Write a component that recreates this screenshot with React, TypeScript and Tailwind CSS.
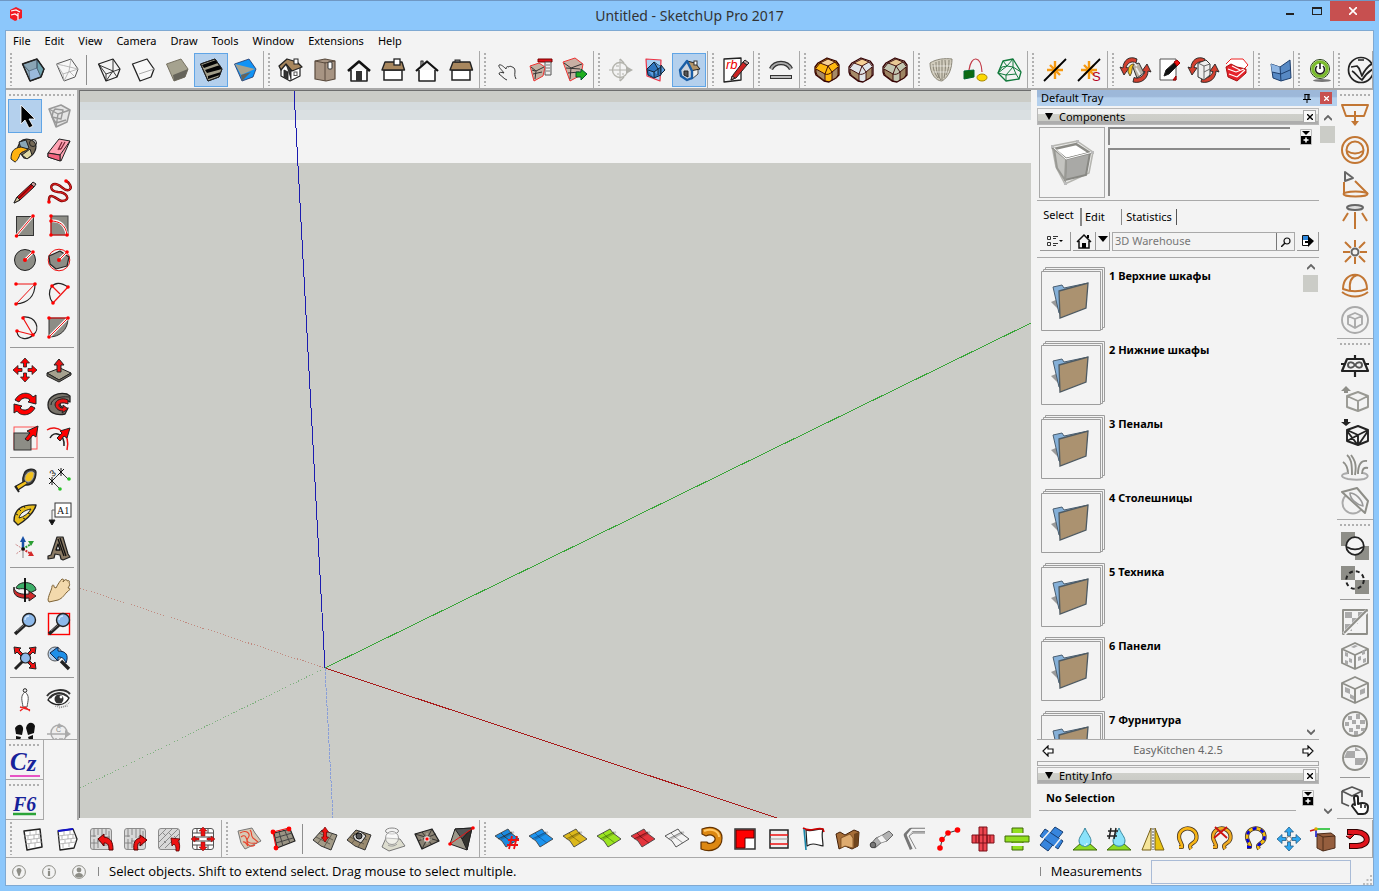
import type { ReactNode } from "react";
import clsx from "clsx";

interface PProps {
  d: string;
  f?: string;
  s?: string;
  w?: number;
  dash?: string;
}

// short path helper, the toolbars hold a lot of small drawings
const P = ({ d, f = "none", s = "#222", w = 1, dash }: PProps) => (
  <path d={d} fill={f} stroke={s} strokeWidth={w} strokeDasharray={dash} strokeLinejoin="round" />
);

const Dot = ({ x, y, r = 1.8, f = "#f00" }: { x: number; y: number; r?: number; f?: string }) => (
  <circle cx={x} cy={y} r={r} fill={f} />
);

const cube = "M1.5 6L16 1l7 10-3 8L9 23z";
const cubeInner = "M1.5 6l7 1.5L23 11M16 1L14 13 20 19M14 13L9 23";
const cubeFace = "M8 17l15-6-3 8L9 23z";
const sheet = "M0 9l13-7 3 4 8 6-13 8-4-6z";
const loop = "M4 20h3c1-3-3-5-3-10C4 3 11 0 16 2c7 3 7 11 2 14-3 2-4 3-2 6";

const Terrain = ({ f = "#a39b88" }: { f?: string }) => (
  <>
    <P d="M0 13L9 3l15 5-6 15-10-4z" f={f} s="#333" />
    <P d="M3 10l14 7M6 6l14 7M5 16L14 5M11 20l8-13" s="#4a463c" w={0.7} />
  </>
);

const Bricks = () => (
  <>
    <rect x="1.5" y="1.5" width="21" height="21" rx="2.5" fill="#d8d8d8" stroke="#8b8b8b" />
    <P d="M5 2v8M9 2v6M13 2v9M17 2v6M20 4v12M5 12v10M9 11v10M2 9h5M8 14h6M2 16h7M15 10h6M13 18h7" s="#777" w={0.8} />
  </>
);

const Wall = () => (
  <P d="M3 9l17-2M4 13l17-2M4 17l17-2M9 4v4M15 3v4M7 9v3M13 8v4M18 7v4M10 13v3M16 12v3M8 17v4M14 16v4" s="#999" w={0.7} />
);

const Wheel = () => (
  <>
    <P d="M13 12L2 22" s="#222" w={3.4} />
    <P d="M11 13L4 19" s="#777" />
    <circle cx="16" cy="8" r="6.5" fill="#8db9ea" stroke="#222" strokeWidth="1.4" />
    <P d="M12 8a4 4 0 014-4" s="#d3e8ff" w={1.4} />
  </>
);

const Arrows4 = ({ f = "#f00", s = "#222" }: { f?: string; s?: string }) => (
  <P
    d="M12 0l4.5 5h-3v4h-3V5h-3zM12 24l4.5-5h-3v-4h-3v4h-3zM0 12l5-4.5v3h4v3H5v3zM24 12l-5-4.5v3h-4v3h4v3z"
    f={f}
    s={s}
    w={0.8}
  />
);

const Swirl = () => (
  <>
    <P d="M14 1C6-3 0 3 0 10l-3-1 4 8 5-7-3-.5C4 6 8 2 13 5z" f="#d3402f" s="#222" w={0.9} />
    <P d="M10 24c9 2 15-4 15-11l3 1-4-8-5 7 3 .5c-1 4-6 8-11 6z" f="#d3402f" s="#222" w={0.9} />
  </>
);

const SheetIcon = ({ f, line = "#333" }: { f: string; line?: string }) => (
  <>
    <P d={sheet} f={f} s="#444" w={0.9} />
    <P d="M6 6l4 4 8 6M3 12l14-7" s={line} w={0.8} />
    <P d="M6 12l13-7" s="#0003" w={2} />
  </>
);

const Chamfer = ({ top, side, edge }: { top: string; side: string; edge: string }) => (
  <>
    <P d="M0 9l3-4 9-5 9 3 3 4v10l-3 3-7 4-5-1-8-6-1-3z" f={edge} s="#300" w={1.3} />
    <P d="M5 5l8-4 7 3-7 4z" f={top} s="#300" w={0.9} />
    <P d="M1 11l9 5v7l-8-6-1-3z" f={side} s="#300" w={0.9} />
    <P d="M17 14l6-5v8l-2 3-4 2z" f={side} s="#300" w={0.9} />
    <P d="M5 5l-4 5M13 8l-3 8M13 8l4 6M20 4l3 4M10 16c2 1 5 0 7-2" s="#300" w={0.9} />
  </>
);

const Loop = ({ s, dash }: { s: string; dash?: string }) => (
  <>
    <P d={loop} s="#432" w={4.2} />
    <P d={loop} s={s} w={2.6} />
    {dash && <P d={loop} s={dash} w={2.6} dash="4 4" />}
  </>
);

const icons: Record<string, ReactNode> = {
  xray: <><P d={cube} f="#8aa5b5" /><P d="M9 23l-1-10 8-3 4 9z" f="#9ab9dc" s="#4c6073" w={0.7} /><P d="M16 1l7 10-3 8-4-9z" f="#6fa3b0" s="#3d5262" w={0.7} /><P d="M1.5 6L8 13M16 1v9" s="#3d5262" w={0.8} /><P d={cube} w={1.4} /></>,
  backEdges: <><P d={cube} f="#f7f7f7" s="#555" /><P d={cubeInner} s="#aaa" w={0.8} /><P d="M1.5 6L8 16l15-5M8 16l1 7" s="#aaa" w={0.8} /></>,
  wire: <><P d={cube} w={1.2} /><P d="M1.5 6L9 16l14-5M9 16v7M16 1v12l4 6M16 13L9 23M16 13L2 7" w={0.9} /></>,
  hidden: <><P d={cube} f="#f8f8f8" w={1.3} /><P d="M8 16l15-5" s="#aaa" /></>,
  shaded: <><P d={cube} f="#a5a28f" s="#777263" /><P d={cubeFace} f="#66645b" s="none" /></>,
  textured: <><P d={cube} f="#a19d89" /><P d="M3 7l14-5 2 3L5 10zM6 12l15-5 2 4L8 15zM9 18l13-4-1 3-12 4z" f="#050505" s="none" /><P d={cube} /></>,
  mono: <><P d={cube} f="#1193f5" s="#236" w={0.8} /><P d="M2 6l20 5-14 6z" f="#a5a28f" s="none" /><P d="M8 17l10-3-9 9z" f="#66645b" s="none" /></>,
  iso: <><P d="M2 9v9l9 5 10-5v-8" f="#fff" w={1.2} /><P d="M0 8l8-7 10 3 5 5-10 4L7 6 2 12z" f="#a8875e" w={1.3} /><P d="M7 7l5 6v9M5 12v7l4 2v-7z" f="#333" w={0.9} /><rect x="15" y="1" width="4" height="5" fill="#fff" stroke="#222" /><rect x="15" y="14" width="3" height="3.5" fill="none" stroke="#555" /></>,
  top: <><P d="M2 3l10-2 10 2v18l-9 2-11-2z" f="#a79483" s="#5a4b3e" w={1.2} /><P d="M12 4v19M2 3l10 2 10-2" s="#5a4b3e" /><rect x="15" y="4" width="4" height="7" rx="1" fill="#fff" stroke="#333" /></>,
  front: <><P d="M4 12v11h16V12" f="#fff" w={1.6} /><P d="M1 13L12 3.5 23 13" w={2.6} s="#111" /><rect x="9" y="13" width="6" height="10" fill="#333" /></>,
  right: <><rect x="3" y="12" width="18" height="10" fill="#fff" stroke="#222" strokeWidth="1.5" /><P d="M4 4h17l2.5 8H1z" f="#a8875e" w={1.4} /><rect x="13" y="1" width="6" height="6" fill="#fff" stroke="#222" strokeWidth="1.3" /></>,
  back: <><P d="M4 12v11h16V12" f="#fff" w={1.6} /><P d="M6 8V3h2v4" w={1.2} /><P d="M1 13L12 3.5 23 13" w={2.2} s="#111" /></>,
  left: <><rect x="3" y="12" width="18" height="10" fill="#fff" stroke="#222" strokeWidth="1.5" /><P d="M4 4h17l2.5 8H1z" f="#a8875e" w={1.4} /><rect x="6" y="2" width="5" height="2" fill="#888" stroke="#222" /></>,
  touch: <P d="M12 22c-3-1-5-4-8-6 0-2 2-2 5-1C7 12 3 9 4 7c2-1 5 2 7 4 0-2 1-3 3-2 0-1 2-1 3 0 1 0 3 1 3 4s-1 4 1 8" s="#333" />,
  options: <><P d="M9 1h14v3H9z" f="#e2101a" s="#700" /><P d="M16 4h6v13h-6z" f="#eee" s="#555" /><P d="M17 7h4M17 10h4M17 13h4" s="#777" /><P d="M1 8l9-3 6 4-2 9-9 5z" f="#c3b0a2" s="#e33" /><P d="M2 9l5 4 8-4M7 13l-1 8M3 12l3 1M4 16l9-2" s="#333" /></>,
  interact: <><P d="M0 4l12-4 8 6-2 11-11 6z" f="#c9b0a4" s="#e33" /><P d="M1 5l7 5 11-4M8 10L7 21M3 10l14 1M5 15l11-1" s="#333" /><P d="M13 14h5v-3l6 5-6 6v-3h-5z" f="#1fae1f" s="#053" /></>,
  section: <><circle cx="11" cy="12" r="7.5" fill="none" stroke="#b5b5ae" strokeWidth="1.4" /><P d="M0 12h20M11 1v22M7 8h3M8 16h2M13 16h2" s="#b0b0aa" /><P d="M17 8l7 4-7 4z" f="#b0b0aa" s="none" /><P d="M11 1l4 4M11 23l4-4" s="#b0b0aa" w={1.5} /></>,
  sectionPlane: <><P d="M3 1l15 1-1 21L4 18z" f="#a9d2f5" s="#e34" w={1.2} /><P d="M4 11l7-7 7 5v8l-7 3-6-3z" f="#2f74bd" s="#123" /><P d="M18 7l4 5-4 4zM11 4l4 7 3-2M5 12l6 2v6M11 14l4-3v6" f="#5b9fe0" s="#123" /></>,
  sectionCut: <><P d="M12 11l9-2v7l-6 5-4-2z" f="#f0f0ec" s="#444" /><P d="M10 3l8 2 5 6-10 2z" f="#b29468" s="#222" /><P d="M3 12l7-9 5 10v7l-5 2-6-4z" f="#ccd3dc" s="#1a5ea6" w={2.4} /><P d="M7 13h4v6l-4-2z" f="#555" /><rect x="17" y="3" width="3" height="4" fill="#fff" stroke="#333" /></>,
  ruby: <><P d="M1 1l17-1v22L1 24z" f="#fff" w={1.3} /><text x="3" y="11" fontSize="13" fontStyle="italic" fontFamily="Liberation Sans" fill="#e00">rb</text><P d="M8 22l2-5L20 4l4 3-11 13z" f="#c22" s="#222" /><P d="M20 4l2-2 4 3-2 2zM8 22l1-4 3 2z" f="#b99" s="#222" /></>,
  bend: <><P d="M2 11c4-8 16-8 20 0" s="#333" w={4.4} /><P d="M2 11c4-8 16-8 20 0" s="#aaa" w={2} /><P d="M1 19h22" s="#333" w={4} /><P d="M2 19h20" s="#ccc" w={1.8} /></>,
  round: <Chamfer top="#f5cf95" side="#a68a68" edge="#ffb90f" />,
  sharp: <Chamfer top="#f5cf95" side="#a68a68" edge="#e1e5ea" />,
  bevel: <Chamfer top="#e8c894" side="#9d8462" edge="#c3c7b2" />,
  weave: <><P d="M1 5c6-4 15-5 22-4 0 9-3 18-10 22C7 23 1 16 1 5z" f="#d1ccbd" s="#8b8779" /><P d="M4 6c0 6 2 10 5 14M7 4c0 7 1 13 5 18M10 3v17M13 2v20M16 2c1 7 0 13-1 18M20 2c0 7-1 11-3 15" s="#7d786b" w={0.9} /><P d="M3 8h19M4 14h16" s="#fff8" /></>,
  wrap: <><P d="M6 12C8-3 18-3 19 14" s="#c23b48" w={1.2} /><P d="M1 13l10-1v7l-10 2z" f="#0c6a12" s="#063" /><ellipse cx="19" cy="19.5" rx="5" ry="3.5" fill="#fbd800" stroke="#a80" /></>,
  mesh: <><P d="M6 3l10-2 8 13-2 7-13 2-8-8z" s="#127a3c" w={1.3} /><P d="M6 3l4 5 6-7v8l8 5M10 8l6 1M10 8L1 15l8 2 7-8 3 7M9 17v6M9 17l10-1 3 5M1 15l4-6 5-1" s="#127a3c" /></>,
  snap: <><P d="M12 3v18M4 12h16M7 7l10 10M17 7L7 17" s="#f59a13" w={2.4} /><P d="M1 23L23 1" s="#000" w={1.8} /></>,
  snapS: <><P d="M12 3v18M4 12h16M7 7l10 10M17 7L7 17" s="#f59a13" w={2.4} /><P d="M1 23L23 1" s="#000" w={1.8} /><text x="15" y="23" fontSize="13" fontFamily="Liberation Sans" fill="#b3001c">S</text></>,
  swapMat: <><Swirl /><P d="M9 7l7-2 5 10-7 5z" f="#b8b1a4" s="#333" /><P d="M13 10l4 7M11 5l3 3" s="#eee" w={1.6} /><P d="M5 14c0-5 2-8 6-8-3 4-1 8-4 12z" f="#f3c31b" s="#653" /></>,
  editDoc: <><P d="M3 1h16v21H3z" f="#fff" s="#555" /><P d="M7 18l2-6 9-8 3 3-9 9z" f="#111" /><P d="M17 4l3-2 3 3-3 3zM16 22l3-4v4z" f="#e11" s="#900" /></>,
  swapComp: <><Swirl /><P d="M7 5l8-3 4 4v11l-6 5-6-3z" f="#eee" s="#333" /><P d="M7 5l6 3v14M13 8l6-2M13 14l6-3" s="#666" /></>,
  sk: <><P d="M1 6l5-5h12l5 6-4 4" f="#fff" s="#e22" /><P d="M1 9l5-3 6 3 9 2v4l-9 8-9-4z" f="#e5232b" s="#a11" /><P d="M3 11l8 3 8-3M4 16l8 3M12 19l8-7M7 8l8 4" s="#fff" w={1.1} /></>,
  flex: <><P d="M2 6l9 3L21 2l1 18-10 3-8-3z" f="#5789c4" s="#1d3f6e" /><P d="M2 6l9 3v7l-8-2z" f="#8fb6e3" s="none" /><P d="M11 9l1 14M3 14l9 2 9-4" s="#1d3f6e" /></>,
  power: <><ellipse cx="13" cy="22.5" rx="9" ry="1.5" fill="#777" /><circle cx="11" cy="11" r="9.5" fill="#fff" stroke="#243d10" /><circle cx="11" cy="11" r="7.2" fill="none" stroke="#7abb2c" strokeWidth="3.2" /><P d="M8 8a4.500 4.500 0 106 0M11 5v6" s="#222" w={1.6} /></>,
  vray: <><circle cx="12" cy="12" r="12.5" fill="none" stroke="#222" strokeWidth="1.7" /><P d="M2 9l6-1c3 2 3 6 5 10 3-7 6-10 11-13M9 2h6M3 13c4 2 5 6 10 9 3-5 6-8 11-11" s="#222" w={1.7} /></>,

  select: <P d="M8 1v19l4-4 4 8 4-2-4-7h6z" f="#000" s="#fff" w={0.8} />,
  component: <><P d="M2 5l12-4 9 5-3 12-11 5z" f="#e4e4e4" s="#999" w={1.5} /><P d="M2 5l9 5 12-4M11 10L9 23M6 8l-1 5 9 2 2-9-8-1zM5 13l4 6 10-3" s="#999" w={1.4} /></>,
  paint: <><P d="M7 4c5-5 15-3 16 4 0 7-7 14-12 12L4 11z" f="#756a58" w={1.2} /><P d="M6 4l7-2 3 8-7 4z" f="#89a7b8" /><P d="M9 17l8-6 2 6-5 4z" f="#dfd8a5" /><P d="M-2 21c0-8 3-11 10-12l7 2c-3 3-6 2-8 5-1 4-4 8-5 8z" f="#ffb20f" /><circle cx="20" cy="5" r="3.5" fill="none" stroke="#222" /></>,
  eraser: <><P d="M1 15L12 1l11 2-9 20-13-4z" f="#ffa3b3" /><P d="M1 15l12 2L23 3M13 17v6" /><P d="M1 15l12 2v6L1 19z" f="#f3637e" /><P d="M11 12l4-8M14 11l4-7M12 11h2" s="#7a2838" w={1.3} /></>,
  pencil: <><P d="M1 23l3-6L18 4l3 3L7 20z" f="#e0161d" /><P d="M6 18L19 5" s="#8a0000" w={1.5} /><P d="M1 23l3-6 3 3z" f="#d8c7a0" /><P d="M18 4l2-2 3 2-2 3z" f="#c99" /></>,
  freehand: <><P d="M2 22c-1-13 9-1 13-1 10-1 4-9-4-9C2 11 3 4 8 4c6 0 9 8 14 6 4-2 0-8-3-9" s="#7c0000" w={2.4} /><P d="M2 22c-1-13 9-1 13-1 10-1 4-9-4-9C2 11 3 4 8 4c6 0 9 8 14 6 4-2 0-8-3-9" s="#f02a2a" /><Dot x={2} y={22} /><Dot x={19} y={1} /></>,
  rect: <><rect x="3.5" y="2.5" width="17" height="19" fill="#8d8d86" stroke="#333" /><P d="M3 22L20 2" s="#fff" w={2.6} /><P d="M3 22L20 2" s="#e11" /><Dot x={3.5} y={22} /><Dot x={20} y={2} /></>,
  rotRect: <><rect x="4" y="2" width="17" height="19" fill="#8d8d86" stroke="#444" /><P d="M4 7c9-1 14 4 16 14" s="#fff" w={2.5} /><P d="M4 2v19h16C19 11 12 7 4 7" s="#e11" /><Dot x={4} y={2} /><Dot x={4} y={7} /><Dot x={4} y={21} /><Dot x={20} y={21} /></>,
  circle: <><circle cx="12" cy="12" r="10.5" fill="#8d8d86" stroke="#222" /><P d="M12 12l8-8" s="#fff" w={2.6} /><P d="M12 12l8-8" s="#e11" /><Dot x={12} y={12} r={2} /><Dot x={20} y={4} /></>,
  polygon: <><circle cx="12" cy="12" r="10.8" fill="none" stroke="#e11" /><P d="M2 8l11-5 9 6-2 9-11 3-6-5z" f="#8d8d86" w={1.2} /><P d="M12 12l8-8" s="#fff" w={2.6} /><P d="M12 12l8-8" s="#e11" /><Dot x={12} y={12} r={2} /><Dot x={20} y={4} /></>,
  arc: <><P d="M3 22C15 21 22 14 22 2" w={1.2} /><P d="M3 2h19L3 22" s="#e11" /><Dot x={3} y={2} /><Dot x={22} y={2} /><Dot x={3} y={22} /></>,
  arc2: <><P d="M6 21C-3 10 6-6 21 5" w={1.2} /><P d="M5 4l8 8M21 5L6 21" s="#e11" w={1.2} /><Dot x={5} y={4} /><Dot x={21} y={5} /><Dot x={6} y={21} /></>,
  arc3: <><P d="M10 1c13-1 18 12 10 18-6 6-15 4-16-3" w={1.2} /><P d="M10 2l10 17L4 15" s="#e11" w={1.2} /><Dot x={10} y={2} /><Dot x={20} y={19} /><Dot x={4} y={15} /></>,
  pie: <><P d="M2 2h19C21 14 13 21 2 21z" f="#8d8d86" s="#333" /><P d="M2 21L21 2" s="#fff" w={2.5} /><P d="M2 21L21 2H2" s="#e11" /><Dot x={2} y={2} /><Dot x={21} y={2} /><Dot x={2} y={21} /></>,
  move: <Arrows4 />,
  push: <><P d="M0 15l13-5 11 5-12 7z" f="#a5a18f" /><P d="M0 15v3l12 6 12-7v-2l-12 7z" f="#6c695f" /><P d="M12 1l5 6h-3v7h-4V7H7z" f="#ee1111" /></>,
  rotate: <><P d="M2 8C7-1 17 0 20 5l3-2v9l-8-2 2-2c-3-3-8-3-11 2z" f="#f00" /><P d="M22 16C17 25 7 24 4 19l-3 2v-9l8 2-2 2c3 3 8 3 11-2z" f="#f00" /></>,
  follow: <><P d="M1 13C1 4 11 0 20 2l3 2v6c-5-3-10-1-10 2s5 5 8 4l-3 6C8 24 1 20 1 13z" f="#77736a" w={1.3} /><P d="M4 13c0-6 8-9 18-8" /><P d="M21 8c-6-3-13 0-13 5 1 4 4 6 8 6l-1 2 6-4-5-4v3c-3 0-4-1-4-3s4-3 9-1z" f="#e11" /></>,
  scale: <><rect x="1" y="1" width="23" height="22" fill="none" stroke="#f55" /><rect x="1" y="7" width="17" height="17" fill="#8d8d86" stroke="#333" /><P d="M12 13l5-6-3-2 11-5-2 11-3-2-5 6z" f="#f00" /></>,
  offset: <><P d="M0 4C9-2 24 6 20 24" s="#e11" w={1.5} /><P d="M3 12c4-8 15-4 14 8" w={1.5} /><P d="M10 12l5-5-2-2 10-3-3 10-3-2-4 5z" f="#f00" /></>,
  tape: <><P d="M11 6c2-6 12-6 12-2 0 8-4 13-9 13-5 0-5-6-3-11z" f="#444" w={1.3} /><P d="M13 7c2-4 7-4 8-2 0 5-3 9-6 9-3-1-4-3-2-7z" f="#f2c11c" s="#aaa" /><P d="M12 13l-9 5 2 4 9-6" f="#f2c11c" w={1.2} /><P d="M2 18l4 6" w={2} /></>,
  dimension: <><P d="M5 13l9-9 7 7M5 13l8 8" s="#444" /><P d="M2 10l6 6M8 10l-6 6M5 9v8M11 1l6 6M17 1l-6 6M14 0v8" s="#111" /><Dot x={13} y={21} f="#26c126" /><Dot x={22} y={11} f="#26c126" /><text x="3" y="8" fontSize="9" fontFamily="Liberation Sans" fill="#111" transform="rotate(-40 6 5)">3</text></>,
  protractor: <><P d="M1 19C1 8 8 2 23 3 21 12 10 20 5 23z" f="#e7bd1b" w={1.4} /><P d="M6 16c1-5 6-8 12-9-2 4-7 8-12 9z" f="#f3f3f3" /><P d="M3 12l2 1M6 7l2 2M11 4l1 2M17 12l-2-1M12 17l-2-1" /></>,
  text: <><rect x="8" y="1" width="16" height="14" fill="#fff" stroke="#333" /><text x="10" y="12" fontSize="10" fontFamily="Liberation Serif" fill="#111">A1</text><P d="M8 8H5v10" s="#666" /><P d="M2 18h6l-3 5z" f="#111" /></>,
  axes: <><P d="M10 13V6" s="#1750a6" w={2.5} /><P d="M7 6l3-6 3 6z" f="#1750a6" s="none" /><P d="M10 13l8-5" s="#2b9e33" w={2} dash="2 1" /><P d="M15 5l6 0-3 5z" f="#2b9e33" s="none" /><P d="M10 13l8 5" s="#d42a2a" w={2} dash="2 1" /><P d="M15 20l6 0-3-5z" f="#d42a2a" s="none" /><P d="M10 13v9" s="#bbb" w={2} /><P d="M10 13l-7 5M10 13L2 8" s="#c88" dash="2 1" /><Dot x={10} y={13} f="#111" /></>,
  text3d: <><P d="M1 20l3-1 6-18h6l5 17 2 3-7 3-2-1-1-4-5-1-1 4-6 1z" f="#8b7b65" w={1.2} /><P d="M11 3l6 17M9 14h4l-2-6zM13 2l6 18" s="#111" w={1.3} f="#f3f3f3" /></>,
  orbit: <><P d="M3 10c3-8 19-7 20 2l-6 3c-1-4-7-5-11-4z" f="#3cae68" /><P d="M1 9c0 6 8 8 15 7v-3l7 5-7 5v-3C6 21-1 18 1 9z" f="#d12a2a" /><P d="M12 0v24" s="#000" w={1.8} /></>,
  pan: <P d="M1 22c1-7 4-10 4-14 1-2 2-1 2 1l2 1C11 6 13 3 15 1c2 0 2 1 1 3 2-3 4-3 4-1 2-1 3 0 2 2 1 1 1 2-1 5 3 0 2 2-1 4-3 3-4 6-9 8l-9 2z" f="#f3d9ac" s="#7d6235" />,
  zoom: <Wheel />,
  zoomWin: <><rect x="1.5" y="1.5" width="21" height="21" fill="none" stroke="#f00" strokeWidth="1.4" /><Wheel /></>,
  zoomExt: <><P d="M1 1l7 1-2 2 4 4-2 2-4-4-2 2zM23 1l-7 1 2 2-4 4 2 2 4-4 2 2zM23 23l-7-1 2-2-4-4 2-2 4 4 2-2z" f="#e11" /><P d="M10 15l-8 8" s="#222" w={3} /><circle cx="12.5" cy="12" r="5" fill="#8db9ea" stroke="#222" strokeWidth="1.2" /></>,
  zoomPrev: <><circle cx="8" cy="8" r="7" fill="#b5cfea" stroke="#555" /><P d="M14 15l8 8" w={3.4} /><P d="M3 7l8-6v4c8 0 11 4 8 12-2-5-4-6-8-6v4z" f="#1e8fe8" s="#124" /></>,
  position: <><circle cx="12" cy="2.5" r="1.8" fill="none" stroke="#222" /><P d="M12 4c-5 4-3 8-2 15h4c1-7 3-11-2-15z" f="#fff" s="#555" /><P d="M7 23l5-4 5 4M7 19l10 3" s="#e22" w={1.4} /></>,
  look: <><P d="M1 12C5 4 16 3 22 10c-4 8-14 9-21 2z" f="#fff" w={1.4} /><circle cx="12" cy="11" r="4.5" fill="#333" /><Dot x={14} y={9} r={1.4} f="#fff" /><P d="M0 8C5 1 18 0 23 6M3 10C8 4 15 4 20 8" s="#333" w={2} /><P d="M8 18c5 2 10 1 15-4M12 20l9-2" s="#888" dash="1 1" /></>,
  walk: <><P d="M2 6c4-6 9-3 8 2l-1 5-6-1zM3 14l5 1-1 3-4-1zM13 6c1-6 7-7 9-2l-1 7-6 2zM15 15l5-2v4l-4 1z" f="#111" s="none" /></>,
  sectionTool: <><circle cx="12" cy="11" r="8" fill="#eee" stroke="#aaa" strokeWidth="1.4" /><P d="M0 12h21M9 16v3M13 16v3M15 16v3" s="#aaa" w={1.5} /><P d="M18 8l6 4-6 4zM12 1l4 4h-6z" f="#aaa" s="none" /><text x="9" y="10" fontSize="7" fontFamily="Liberation Sans" fill="#888">C</text></>,

  brick: <><P d="M3 4l16-2 2 18-15 3z" f="#fff" w={1.5} /><Wall /></>,
  brickBlue: <><P d="M3 4l15-2 4 10-3 9-14 2z" f="#fff" w={1.3} /><Wall /><P d="M3 4l15-2" s="#11c" w={2} /></>,
  brickL: <><Bricks /><P d="M9 12l6-5v3c7 1 9 5 9 13h-4c0-5-1-7-5-7v3z" f="#e11" s="#500" /></>,
  brickR: <><Bricks /><P d="M24 13l-7-5v3c-5 1-7 5-6 12h4c-1-5 0-7 2-8v4z" f="#e11" s="#500" /></>,
  brickUp: <><rect x="1.5" y="1.5" width="21" height="21" rx="2.5" fill="#d8d8d8" stroke="#8b8b8b" /><P d="M2 9l7-7M2 15L15 2M2 21L21 2M8 21L22 7M6 6l3 3M12 6l2 2M7 14l2 2M17 9l2 2" s="#777" w={0.8} /><P d="M14 11l9 1-2 2c2 3 2 6 1 10h-3c0-4 0-5-2-7l-2 2z" f="#e11" s="#500" w={0.8} /></>,
  brickMove: <><rect x="1.5" y="1.5" width="21" height="21" rx="2.5" fill="#fff" stroke="#555" /><P d="M2 6h20M2 10h20M2 14h20M2 18h20M6 2v4M17 2v4M5 10v4M18 10v4M6 18v4M17 18v4" s="#444" /><P d="M12 0l4 4h-2v5h-4V4H8zM12 24l4-4h-2v-5h-4v5H8zM0 12l4-3v2h4v2H4v2zM24 12l-4-3v2h-4v2h4v2z" f="#e11" s="#711" w={0.5} /></>,
  contours: <><P d="M1 4l14-3 3 5 6 8-16 8-4-6z" f="#d8c9b6" s="#777" /><P d="M3 6c7-4 11 1 8 5s2 6 9 5M4 10c5-4 6 3 6 5s3 6 8 3M6 15c3-1 3 2 5 4M13 3c3 3 0 5 3 8l5 4" s="#e8412a" w={1.1} /></>,
  scratch: <><P d="M3 6l16-4 5 12-18 7z" f="#9a9484" w={1.2} /><P d="M8 5l4 14M14 4l5 12M4 11l17-5M5 16l17-5" s="#444" /><P d="M5 20L2 5l16-4" s="#e11" w={1.2} /><Dot x={2} y={5} r={2.4} /><Dot x={18} y={2} r={2.4} /><Dot x={5} y={21} r={2.4} /></>,
  smoove: <><Terrain /><P d="M12 0l3.500 5h-2v5h2L12 15l-3.500-5h2V5h-2z" f="#e11" s="#700" w={0.7} /></>,
  stamp: <><Terrain f="#9a8b70" /><P d="M6 9l7-5 6 5-5 7-6-3z" f="#ddd" /><circle cx="12" cy="9" r="3" fill="#555" stroke="#111" /></>,
  drape: <><P d="M1 20l4-9 14 1 5 7-16 5z" f="#ddddcf" s="#777" /><ellipse cx="11" cy="4" rx="6.500" ry="3" fill="none" stroke="#888" /><circle cx="11" cy="11" r="6.5" fill="#fff8" stroke="#999" /><P d="M7 18c3 2 7 1 9-1" s="#999" /></>,
  detail: <><P d="M0 7l17-5 7 12-17 8z" f="#8b8374" w={1.3} /><P d="M0 7l24 7M17 2L7 22M7 5l10 13M3 14l18-7" s="#222" w={0.8} /><P d="M12 6v12M6 12h12" s="#bba" dash="2 1" /><rect x="10" y="10" width="4" height="4" fill="#f00" stroke="#fff" /></>,
  flip: <><P d="M6 2l17-1-5 22L1 17z" f="#9c988a" /><P d="M6 2l17-1-10 11z" f="#555" /><P d="M23 1l-5 22-5-11z" f="#33332f" /><P d="M1 17L24 1" s="#e11" /><Dot x={1} y={17} /><Dot x={24} y={1} /></>,

  skinHash: <><SheetIcon f="#1b8be0" /><P d="M17 9l-3 13M22 9l-3 13M13 13h11M12 18h11" s="#e11" w={1.8} /></>,
  skinBlue: <SheetIcon f="#1b93ee" line="#1259a0" />,
  skinGold: <SheetIcon f="#dcb81c" line="#8c7206" />,
  skinGreen: <SheetIcon f="#9be421" line="#4f8d0d" />,
  skinRed: <SheetIcon f="#e3343c" line="#7a0d12" />,
  skinWire: <SheetIcon f="#f4f4f4" line="#777" />,
  cShape: <><P d="M3 2c10-4 20 0 20 9 0 11-11 15-21 11v-7h6c1 3 9 1 8-4-1-3-5-4-9-2l-4-2z" f="#dd8812" s="#643300" w={1.2} /><P d="M5 4c8-3 15 0 15 6" s="#ffc663" w={2} /></>,
  redL: <><rect x="2" y="2" width="20" height="20" fill="#fff" stroke="#333" strokeWidth="1.5" /><P d="M3 3h18v8H12v10H3z" f="#f00" s="#500" /></>,
  ladder: <><rect x="3" y="3" width="18" height="18" fill="#eee" stroke="#222" strokeWidth="1.5" /><P d="M3 8h18M3 17h18" s="#e11" w={1.5} /><P d="M3 12h18" s="#999" /></>,
  flag: <><P d="M5 3c5 2 10-1 17-1-2 6 0 11 0 17-6-1-10-4-16 0z" f="#fff" w={1.2} /><P d="M2 1c8 5 12-1 20 1l1 3" s="#c00" w={1.6} /><P d="M3 2l2 21" s="#1885a8" w={1.6} /></>,
  wood: <><P d="M1 7l4-2 5 3 9-5 5 2-1 14-6 3-7-3-6 3z" f="#a66d37" s="#432008" /><P d="M6 11l9-4 3 4v10l-8-2-4 2z" f="#deab6f" s="#6b4019" w={0.7} /><P d="M19 7l5-2-1 14-4 2z" f="#6f441c" s="none" /></>,
  pipe: <><P d="M1 18l5 3 7-6 5-1 6-6-4-4-8 5-5 2z" f="#b2b2b2" s="#666" /><P d="M8 11l4 5 6-2-5-6z" f="#f4f4f4" s="#888" w={0.7} /><circle cx="4" cy="18" r="2.8" fill="#777" stroke="#444" /></>,
  gutter: <><P d="M22 3H8L3 8l6 14" s="#777" w={4.6} /><P d="M23 3H9L5 8l6 14" s="#f3f3f3" w={2.4} /><P d="M22 6H10L6 9l7 13" s="#777" w={0.9} /></>,
  nodes: <><P d="M3 22l2-9 6-7 10-3" s="#333" /><Dot x={3} y={21} r={2.8} /><Dot x={5} y={12.5} r={2.8} /><Dot x={11} y={6} r={2.8} /><Dot x={20.5} y={3} r={2.8} /></>,
  crossRed: <><P d="M8 0h8v24H8zM1 8h22v8H1z" f="#ee4650" s="#7a1018" /><P d="M8 8v8M16 8v8M5 8v8M19 8v8M12 0v24" s="#7a1018" /></>,
  crossGreen: <><P d="M7 1h11v22H7z" f="#93df20" s="#3f6909" /><P d="M6 6h13v3H6zM6 16h13v3H6z" f="#f3f3f3" s="none" /><P d="M0 9h24v6H0z" f="#93df20" s="#3f6909" /></>,
  crossBlue: <><P d="M16 0l8 5-15 19-8-6z" f="#3785dd" s="#173e72" /><P d="M6 2l18 12-5 8L1 9z" f="#3785dd" s="#173e72" /><P d="M11 4l-8 9M22 11l-8 10M4 0L0 7" s="#f3f3f3" w={1.5} /></>,
  drop: <><P d="M0 23l8-7h8l8 7z" f="#8edb24" s="#3f6909" /><P d="M12 1c3 7 6 9 6 13 0 7-12 7-12 0 0-4 3-6 6-13z" f="#8ae2fa" s="#36869e" /><P d="M14 16c0 2-1 3-3 2" s="#fff" /></>,
  dropHash: <><P d="M0 23l8-7h8l8 7z" f="#8edb24" s="#3f6909" /><P d="M12 1c3 7 6 9 6 13 0 7-12 7-12 0 0-4 3-6 6-13z" f="#8ae2fa" s="#36869e" /><P d="M4 1L2 12M9 1L7 12M1 4h10M0 9h10" w={1.5} /></>,
  prism: <><P d="M10 1v22H1z" f="#f5e59a" s="#776017" /><P d="M14 1v22h9z" f="#e9c312" s="#776017" /><P d="M12 1v22" s="#555" dash="2 1" /></>,
  loop: <Loop s="#f7b515" />,
  loopCut: <><Loop s="#f0ab21" /><P d="M6 0l12 11M18 0L5 11" s="#c11" w={1.8} /></>,
  loopBlue: <Loop s="#f7c012" dash="#00d" />,
  moveBlue: <><Arrows4 f="#30a8f0" s="#245e88" /><circle cx="12" cy="12" r="2.5" fill="#fff" stroke="#777" /></>,
  boxAxes: <><P d="M6 7l14-1 4 3v12l-12 3-6-3z" f="#955e3e" s="#4d2c19" /><P d="M6 7l6 3v14M12 10l12-1" s="#4d2c19" /><P d="M6 2L-1 4" s="#c11" w={1.4} /><P d="M5 2h14" s="#1b2" w={1.5} /><P d="M5 2v8" s="#11c" w={1.5} /><Dot x={5} y={2} f="#da0" /></>,
  magnet: <><P d="M2 5h10c13 1 13 14 0 14H4" s="#300" w={6} /><P d="M3 5h9c13 1 13 14 0 14H5" s="#e0141d" w={4} /><P d="M1 9l4 3 5-5" f="#e0141d" s="#300" /></>,
};

// 28px set of the render toolbar
const ORANGE = "#c27633";
const GREY = "#8e8e88";
const HexCube = () => <P d="M1 7l13-6 13 6v14l-13 6-13-6zM1 7l13 6 13-6M14 13v14" s={GREY} w={1.9} />;

const bigIcons: Record<string, ReactNode> = {
  rectLight: <><P d="M1 3h26l-4 11H5z" s={ORANGE} w={2} /><P d="M14 9v12" s={ORANGE} w={2} /><P d="M10 19h8l-4 5z" f={ORANGE} s="none" /></>,
  sphereLight: <><circle cx="14" cy="14" r="13" fill="none" stroke={ORANGE} strokeWidth="2" /><circle cx="14" cy="14" r="8.5" fill="none" stroke={ORANGE} strokeWidth="2" /><P d="M6 15c5 3 11 3 16 0" s={ORANGE} w={2} /></>,
  spotLight: <><P d="M4 2l8 6-8 3z" s="#666" w={2} /><P d="M3 12v12M14 11l13 13" s={ORANGE} w={2} /><ellipse cx="14.5" cy="24" rx="12" ry="2.5" fill="none" stroke={ORANGE} strokeWidth="2" /></>,
  iesLight: <><ellipse cx="14" cy="3.5" rx="8" ry="2.5" fill="#ddd" stroke="#666" strokeWidth="2" /><P d="M14 8v17M7 9L2 17M21 9l5 8" s={ORANGE} w={2} /></>,
  omniLight: <><circle cx="14" cy="14" r="3.5" fill="none" stroke="#666" strokeWidth="2" /><P d="M14 2v7M14 19v7M2 14h7M19 14h7M4 4l6 6M18 18l6 6M24 4l-6 6M10 18l-6 6" s={ORANGE} w={2} /></>,
  domeLight: <><P d="M2 17C2-2 26-2 26 17c-8 3-16 3-24 0zM9 18C8 10 10 5 16 3M1 20c8 6 18 6 26 0" s={ORANGE} w={2} /></>,
  meshLight: <><circle cx="14" cy="14" r="13" fill="none" stroke="#aaa" strokeWidth="1.9" /><P d="M7 10l7-3 7 3v8l-7 4-7-4zM7 10l7 3 7-3M14 13v9" s="#aaa" w={1.9} /></>,
  plane: <><P d="M6 8h16l5 12H1zM0 13h4M24 13h4M14 4v4M14 20v6" s="#222" w={2.2} /><P d="M14 14c-3-4-7-3-7 0s4 4 7 0 7-3 7 0-4 4-7 0" s="#555" w={2} /></>,
  exportProxy: <><P d="M6 11l11-4 10 4v11l-10 4-11-4zM6 11l11 5 10-5M17 16v10" s="#999993" w={1.9} /><P d="M5 1l5 5H7v2H3V6H0z" f={GREY} s="none" /></>,
  importProxy: <><P d="M6 11l11-4 10 4v11l-10 4-11-4zM6 11l11 5 10-5M17 16v10M6 12l10 13M17 16L6 22M27 12L18 25" s="#222" w={1.9} /><P d="M5 7l5-4H7V0H3v3H0z" f="#222" s="none" /></>,
  fur: <><P d="M11 22C11 10 10 5 6 2M14 22C16 10 13 6 10 2M17 21c0-9 3-14 9-13M7 21C7 14 5 11 2 9M21 21c0-5 2-7 6-6" s={GREY} w={1.9} /><P d="M7 20c-7 1-9 4 0 6 6 1 12 1 16 0 6-2 4-5-1-6" s="#aaa" w={1.9} /></>,
  clipper: <><circle cx="12" cy="16" r="10.5" fill="none" stroke="#aaa" strokeWidth="1.9" /><P d="M1 5l15-4 11 13-3 12z" s={GREY} w={2} f="#f3f3f3" /><P d="M9 6c5 0 12 6 13 13-6-1-13-7-13-13z" s="#999" w={1.6} /></>,
  hideV: <><P d="M0 0h14v14H0zM14 14h14v14H14z" f={GREY} s="none" /><circle cx="14" cy="14" r="8.8" fill="#f3f3f3" stroke="#222" strokeWidth="1.8" /><P d="M6 15c5 3 11 3 16 0" w={1.7} /></>,
  showV: <><P d="M0 0h14v14H0zM14 14h14v14H14z" f={GREY} s="none" /><circle cx="14" cy="14" r="8.8" fill="none" stroke="#222" strokeWidth="2" strokeDasharray="4 3" /></>,
  matPlane: <><P d="M2 2h24v24H2z" s={GREY} w={1.9} /><P d="M4 4h7v6H4zM11 10h6v6h-6zM17 4h7l-7 6zM4 16h7v7H4z" f="#aaa" s="none" /><P d="M3 26L26 3" s="#f3f3f3" w={4} /><P d="M3 25L26 2" s={GREY} w={1.9} /></>,
  cubeFine: <><HexCube /><P d="M4 10l3 1v4l-3-1zM8 16l3 1v4l-3-1zM17 15l3-1v4l-3 1zM21 9l3-1v4l-3 1zM22 17l3-1v4l-3 1zM10 5l4-2 3 1-4 2zM4 18l3 1v4l-3-1z" f="#aaa" s="none" /></>,
  cubeCoarse: <><HexCube /><P d="M4 11l5 2v5l-5-2zM9 18l4 2v4l-4-2zM19 14l5-2v5l-5 2z" f="#aaa" s="none" /></>,
  sphereFine: <><circle cx="14" cy="14" r="12" fill="none" stroke={GREY} strokeWidth="1.9" /><P d="M7 6h4v4H7zM15 4h4v5h-4zM11 10h4v4h-4zM19 10h5v4h-5zM4 12h4v4H4zM15 15h4v4h-4zM8 18h4v4H8zM13 21h4v4h-4zM20 18h4v3h-4z" f="#aaa" s="none" /></>,
  sphereCoarse: <><circle cx="14" cy="14" r="12" fill="none" stroke={GREY} strokeWidth="1.9" /><P d="M6 7h8v7H3zM14 14h11l-4 7h-7zM14 7V3l6 4z" f="#aaa" s="none" /></>,
  pick: <><P d="M1 5l10-4 10 4v6M1 5l10 5 10-5M1 5v12l7 3" s="#555" w={1.7} /><P d="M13 12c0-3 4-3 4 0v6c4-2 10-1 10 3 0 4-1 7-5 7h-5l-6-8c1-3 3-1 3-1z" f="#fff" s="#222" w={2} /><P d="M20 18v4M24 19v3" w={1.6} /></>,
};

const topGroups = [
  { keys: ["xray", "backEdges", "|", "wire", "hidden", "shaded", "textured", "mono"] },
  { keys: ["iso", "top", "front", "right", "back", "left"] },
  { keys: ["touch", "options", "interact"] },
  { keys: ["section", "sectionPlane", "sectionCut"] },
  { keys: ["ruby"] },
  { keys: ["bend"] },
  { keys: ["round", "sharp", "bevel"] },
  { keys: ["weave", "wrap", "mesh"] },
  { keys: ["snap", "snapS"] },
  { keys: ["swapMat", "editDoc", "swapComp", "sk"], className: "w-[146px]" },
  { keys: ["flex"], className: "w-10" },
  { keys: ["power"], className: "w-10" },
  { keys: ["vray"], className: "flex-1" },
];

const bottomGroups = [
  { keys: ["brick", "brickBlue", "brickL", "brickR", "brickUp", "brickMove"] },
  { keys: ["contours", "scratch", "|", "smoove", "stamp", "drape", "detail", "flip"] },
  {
    keys: [
      "skinHash", "skinBlue", "skinGold", "skinGreen", "skinRed", "skinWire", "cShape", "redL", "ladder",
      "flag", "wood", "pipe", "gutter", "nodes", "crossRed", "crossGreen", "crossBlue", "drop", "dropHash",
      "prism", "loop", "loopCut", "loopBlue", "moveBlue", "boxAxes", "magnet",
    ],
    className: "flex-1",
  },
];

const leftSections = [
  ["select", "component", "paint", "eraser"],
  ["pencil", "freehand", "rect", "rotRect", "circle", "polygon", "arc", "arc2", "arc3", "pie"],
  ["move", "push", "rotate", "follow", "scale", "offset"],
  ["tape", "dimension", "protractor", "text", "axes", "text3d"],
  ["orbit", "pan", "zoom", "zoomWin", "zoomExt", "zoomPrev"],
  ["position", "look", "walk", "sectionTool"],
];

const rightSections = [
  ["rectLight", "sphereLight", "spotLight", "iesLight", "omniLight", "domeLight", "meshLight"],
  ["plane", "exportProxy", "importProxy", "fur", "clipper"],
  ["hideV", "showV", "|", "matPlane", "cubeFine", "cubeCoarse", "sphereFine", "sphereCoarse", "|", "pick"],
];

const active = ["textured", "sectionCut", "select"];
const menus = ["File", "Edit", "View", "Camera", "Draw", "Tools", "Window", "Extensions", "Help"];
const folders = ["1 Верхние шкафы", "2 Нижние шкафы", "3 Пеналы", "4 Столешницы", "5 Техника", "6 Панели", "7 Фурнитура"];

const ToolButton = ({ name }: { name: string }) => (
  <button
    aria-label={name}
    className={clsx(
      "flex h-[34px] w-[34px] shrink-0 items-center justify-center border",
      active.includes(name) ? "border-[#60a5e6] bg-[#b4d0ed]" : "border-transparent"
    )}
  >
    {icons[name] ? (
      <svg viewBox="0 0 24 24" className="h-6 w-6 shrink-0 overflow-visible">{icons[name]}</svg>
    ) : (
      <svg viewBox="0 0 28 28" className="h-7 w-7 shrink-0 overflow-visible">{bigIcons[name]}</svg>
    )}
  </button>
);

const GripX = () => (
  <div className="mx-[3px] mb-[3px] mt-1 h-[2px] shrink-0 bg-[repeating-linear-gradient(90deg,#b0b0b0_0_2px,transparent_2px_4px)]" />
);

const ToolGroup = ({ keys, className }: { keys: string[]; className?: string }) => (
  <div className={clsx("flex shrink-0 items-center overflow-hidden border-r border-[#a9a9a9] pr-px", className)}>
    <div className="mx-1 h-[33px] w-[2px] shrink-0 bg-[repeating-linear-gradient(#b0b0b0_0_2px,transparent_2px_4px)]" />
    {keys.map((k, i) =>
      k === "|" ? <div key={i} className="ml-[2px] mr-[5px] h-[30px] w-px shrink-0 bg-[#8e8e8e]" /> : <ToolButton key={k} name={k} />
    )}
  </div>
);

const Chevron = ({ down = false }: { down?: boolean }) => (
  <svg viewBox="0 0 8 6" className="h-[6px] w-2">
    <path d={down ? "M0 1l4 4 4-4" : "M0 5l4-4 4 4"} fill="none" stroke="#666" strokeWidth="1.8" />
  </svg>
);

const Scroll = ({ className }: { className?: string }) => (
  <div className={clsx("flex w-[15px] shrink-0 flex-col items-center justify-between", className)}>
    <div className="flex w-full flex-col items-center gap-[5px]">
      <Chevron />
      <div className="h-[17px] w-full bg-[#cbccc7]" />
    </div>
    <Chevron down />
  </div>
);

const SectionHeader = ({ title }: { title: string }) => (
  <div className="flex h-[17px] shrink-0 items-center border border-[#b9b9b9] bg-linear-to-b from-[#f3f3f3] from-30% via-[#cfd0cb] via-35% to-[#cbccc7] to-75% pl-[7px] shadow-[inset_0_-3px_#adadad]">
    <svg viewBox="0 0 8 7" className="mr-[6px] h-[7px] w-2"><path d="M0 0h8L4 7z" /></svg>
    <span className="flex-1 text-[11px] leading-4">{title}</span>
    <button aria-label="Close" className="mr-[2px] flex h-[13px] w-[13px] items-center justify-center border border-[#aaa] bg-[#f8f8f8]">
      <svg viewBox="0 0 6 6" className="h-[6px] w-[6px]"><path d="M0 0l6 6M6 0L0 6" stroke="#000" strokeWidth="1.4" /></svg>
    </button>
  </div>
);

const Expand = () => (
  <button aria-label="Details" className="flex h-4 w-3 shrink-0 items-center justify-center">
    <svg viewBox="0 0 12 16" className="h-4 w-3">
      <path d="M.5.5h11v15H.5z" fill="#f3f3f3" stroke="#bbb" />
      <path d="M2 2h8L6 6zM1 7h10v8H1z" />
      <path d="M6 8.500v5M3.500 11h5" stroke="#fff" strokeWidth="1.5" />
    </svg>
  </button>
);

const FolderThumb = () => (
  <svg viewBox="0 0 64 64" className="h-16 w-16 shrink-0">
    <path d="M4.5 2V.5h59v60h-2M2.500 4V2.500h59v60h-2M.500 4.500h59v59H.500z" fill="#f3f3f3" stroke="#9d9d9d" />
    <path d="M10 35l12-5v17z" fill="#999" />
    <path d="M12 20l9-2 2 3 24-5-25 32-4-2z" fill="#85b0d8" stroke="#4a5e70" />
    <path d="M18 24l29-8-2 25-26 10z" fill="#ab9270" stroke="#4e5a62" strokeWidth="1.3" />
  </svg>
);

const Arrow = ({ flip = false }: { flip?: boolean }) => (
  <button aria-label={flip ? "Forward" : "Back"} className="flex h-5 w-[22px] items-center justify-center">
    <svg viewBox="0 0 12 12" className="h-3 w-3">
      <path d={flip ? "M1 4h5V1l5 5-5 5V8H1z" : "M11 4H6V1L1 6l5 5V8h5z"} fill="#fff" stroke="#111" strokeWidth="1.2" />
    </svg>
  </button>
);

const Tray = () => (
  <aside className="ml-[6px] flex w-[300px] shrink-0 flex-col text-black">
    <div className="flex h-4 shrink-0 items-center bg-linear-to-b from-[#9db8d9] from-40% to-[#b4d0ed] to-50% pl-1">
      <h2 className="flex-1 text-[11px] leading-4">Default Tray</h2>
      <button aria-label="Pin" className="mr-[9px]">
        <svg viewBox="0 0 8 9" className="h-[9px] w-2"><path d="M2 0v5M6 0v5M1.500.5h5M0 5.500h8M4 6v3M5 1v4" stroke="#000" fill="none" /></svg>
      </button>
      <button aria-label="Close tray" className="mr-[5px] flex h-3 w-3 items-center justify-center bg-[#c75050]">
        <svg viewBox="0 0 6 6" className="h-[5px] w-[5px]"><path d="M0 0l6 6M6 0L0 6" stroke="#fff" strokeWidth="1.5" /></svg>
      </button>
    </div>
    <div className="mt-[2px] flex min-h-0 flex-1">
      <div className="flex min-w-0 flex-1 flex-col">
        <SectionHeader title="Components" />
        <div className="flex h-[76px] shrink-0 border-b border-[#a9a9a9] pl-[2px] pt-[2px]">
          <div className="flex h-[71px] w-[66px] items-center justify-center border border-[#a9a9a9]">
            <svg viewBox="0 0 44 46" className="h-[46px] w-[44px]">
              <path d="M2 6L27 1l16 11-4 21-24 11-9-17z" fill="#e9e9e7" stroke="#b5b5b0" strokeWidth="1.5" />
              <path d="M4 9l22-5 14 9-24 6z" fill="#fff" stroke="#8b8b86" strokeWidth="2.5" />
              <path d="M16 19l24-6-4 22-21 5z" fill="#a9a9a6" stroke="#888883" strokeWidth="2" />
              <path d="M4 9l12 10-1 21-8-12z" fill="#c4c4c0" stroke="#999994" strokeWidth="2" />
              <path d="M2 6l14 13M43 12l-27 7" stroke="#fff" />
              <path d="M1 5h3v3H1zM26 0h3v3h-3zM41 11h3v3h-3zM14 42h3v3h-3z" fill="#bbb" />
            </svg>
          </div>
          <div className="ml-[3px] flex flex-1 flex-col gap-[3px]">
            <input aria-label="Component name" className="h-[18px] w-full border-l-2 border-t-2 border-[#8a8a8a] bg-transparent text-xs outline-none" />
            <textarea aria-label="Description" className="h-[48px] w-full resize-none border-l-2 border-t-2 border-[#8a8a8a] bg-transparent text-xs outline-none" />
          </div>
          <div className="ml-[10px] mr-[7px] pt-[2px]"><Expand /></div>
        </div>
        <div className="flex h-[30px] shrink-0 items-center pt-[2px] text-[11px]">
          <button className="w-[43px] pb-[3px]">Select</button>
          <div className="h-[18px] w-[2px] bg-[#8a8a8a]" />
          <button className="w-[39px] pl-[3px] text-left">Edit</button>
          <div className="h-4 w-px bg-[#8a8a8a]" />
          <button className="w-[54px]">Statistics</button>
          <div className="h-4 w-px bg-[#555]" />
        </div>
        <div className="flex h-[27px] shrink-0 gap-[2px] border-b border-[#a9a9a9] pb-[6px] pl-[3px] pt-px">
          <button aria-label="View options" className="flex w-[31px] items-center justify-center border-b border-r border-[#999]">
            <svg viewBox="0 0 18 12" className="h-3 w-[18px]">
              <path d="M1.500 1.500h3v3h-3zM1.500 7.500h3v3h-3z" fill="none" stroke="#333" />
              <path d="M7 1.500h5M7 3.500h3M7 8.500h5M7 10.500h3" stroke="#333" />
              <path d="M13 5h4l-2 2z" />
            </svg>
          </button>
          <div className="flex">
            <button aria-label="In model" className="flex w-[23px] items-center justify-center border-b border-r border-[#999]">
              <svg viewBox="0 0 16 16" className="h-4 w-4"><path d="M1 9l7-7 7 7M3 8v7h10V8" fill="none" stroke="#111" strokeWidth="1.5" /><path d="M6 10h4v5H6zM11 2h2v3h-2z" /></svg>
            </button>
            <button aria-label="Navigation" className="flex w-[14px] justify-center border-b border-r border-[#999] pt-1">
              <svg viewBox="0 0 10 6" className="h-[6px] w-[10px]"><path d="M0 0h10L5 6z" /></svg>
            </button>
          </div>
          <div className="flex min-w-0 flex-1 border border-[#a9a9a9]">
            <input aria-label="Search" placeholder="3D Warehouse" className="min-w-0 flex-1 bg-transparent px-[2px] text-[11px] outline-none placeholder:text-[#777]" />
            <button aria-label="Find" className="flex w-[18px] items-center justify-center border-l border-[#777]">
              <svg viewBox="0 0 10 10" className="h-[10px] w-[10px]"><circle cx="6" cy="4" r="3" fill="none" stroke="#111" strokeWidth="1.2" /><path d="M4 6L0 10" stroke="#111" strokeWidth="1.5" /></svg>
            </button>
          </div>
          <button aria-label="Details menu" className="flex w-[22px] items-center justify-center border-b border-r border-[#999]">
            <svg viewBox="0 0 12 12" className="h-3 w-3"><path d="M.500.500h6v10h-6z" fill="#fff" stroke="#111" /><path d="M1 1h5v4H1z" fill="#2d87dc" /><path d="M3 6h3V1l6 5-6 6V8H3z" /></svg>
          </button>
        </div>
        <div className="flex min-h-0 flex-1 border-b border-[#a9a9a9] pt-[9px]">
          <ul className="flex min-w-0 flex-1 flex-col gap-[10px] overflow-hidden pl-1">
            {folders.map((name) => (
              <li key={name} className="flex h-16 shrink-0 gap-1">
                <FolderThumb />
                <span className="text-[11px] font-bold leading-[18px]">{name}</span>
              </li>
            ))}
          </ul>
          <Scroll className="-mt-[3px] mb-1 mr-px" />
        </div>
        <div className="flex h-[21px] shrink-0 items-center justify-between text-[11px] text-[#666]">
          <Arrow />
          <span>EasyKitchen 4.2.5</span>
          <Arrow flip />
        </div>
        <div className="mb-px h-[5px] shrink-0 border border-[#a9a9a9]" />
        <SectionHeader title="Entity Info" />
        <div className="ml-[2px] mr-[5px] flex h-[36px] shrink-0 justify-between">
          <div className="h-[27px] flex-1 border-b border-[#a9a9a9] pl-[7px] text-[11px] font-bold leading-7">No Selection</div>
          <div className="pl-[6px] pt-[6px]"><Expand /></div>
        </div>
      </div>
      <Scroll className="ml-px mr-[2px] pb-[6px] pt-[7px]" />
    </div>
  </aside>
);

const Viewport = () => (
  <main className="relative mb-[2px] min-w-0 flex-1 border-l border-t border-[#6e6e6e] bg-[#cbccc7]">
    <div className="h-[11px] bg-[#cbccc7]" />
    <div className="h-2 bg-[#d5dbde]" />
    <div className="h-[10px] bg-[#dae0e2]" />
    <div className="h-[43px] bg-[#f3f3f3]" />
    <svg viewBox="0 0 951 727" preserveAspectRatio="none" shapeRendering="crispEdges" className="absolute inset-0 h-full w-full" fill="none">
      <path d="M214 0l31 577" stroke="#1c1cb0" />
      <path d="M245 577l706-345" stroke="#3aa53a" />
      <path d="M245 577l452 150" stroke="#a81c1c" />
      <path d="M0 497l245 80" stroke="#c08a80" strokeDasharray="1 2" />
      <path d="M0 697l245-120" stroke="#7fb07f" strokeDasharray="1 2" />
      <path d="M245 577l8 150" stroke="#8a9fd8" strokeDasharray="3 1" />
    </svg>
  </main>
);

const MiniBar = ({ label, children }: { label: string; children: ReactNode }) => (
  <div className="flex h-10 w-[38px] shrink-0 flex-col border-b border-r border-[#a9a9a9]">
    <GripX />
    <button aria-label={label} className="flex flex-1 items-center justify-center">
      <svg viewBox="0 0 32 28" className="h-7 w-8 overflow-visible">{children}</svg>
    </button>
  </div>
);

const StatusIcon = ({ label, children }: { label: string; children: ReactNode }) => (
  <button aria-label={label} className="mr-4 h-[14px] w-[14px]">
    <svg viewBox="0 0 14 14" className="h-[14px] w-[14px]">
      <circle cx="7" cy="7" r="6.4" fill="none" stroke="#8d8d86" />
      {children}
    </svg>
  </button>
);

export default function App() {
  return (
    <div className="flex h-screen flex-col overflow-hidden border-t border-[#6f98c4] bg-[#8cc7fb] font-['Noto_Sans',sans-serif] text-black">
      <header className="grid h-[29px] shrink-0 grid-cols-[1fr_auto_1fr]">
        <div className="pl-[9px] pt-[6px]">
          <svg viewBox="0 0 14 15" className="h-[15px] w-[14px]">
            <path d="M1 3l6-3 6 3v8l-7 3-5-3z" fill="#f11c25" />
            <path d="M2 4l5-1 4 2M2 8l4-1 3 2M9 13V6" fill="none" stroke="#fff" strokeWidth="1.2" />
          </svg>
        </div>
        <h1 className="text-sm leading-[29px] text-[#333]">Untitled - SketchUp Pro 2017</h1>
        <div className="flex items-start justify-end pr-1">
          <button aria-label="Minimize" className="flex h-5 w-[26px] items-center justify-center pt-[6px]"><span className="h-[2px] w-2 bg-[#222]" /></button>
          <button aria-label="Maximize" className="flex h-5 w-[27px] items-center justify-center"><span className="h-2 w-[10px] border border-t-2 border-[#222]" /></button>
          <button aria-label="Close window" className="flex h-5 w-[45px] items-center justify-center bg-[#c75050]">
            <svg viewBox="0 0 8 8" className="h-2 w-2"><path d="M0 0l8 8M8 0L0 8" stroke="#fff" strokeWidth="1.6" /></svg>
          </button>
        </div>
      </header>

      <div className="mx-[5px] mb-[5px] flex min-h-0 flex-1 flex-col border border-[#7fa9d2] bg-[#f3f3f3]">
        <nav className="flex h-5 shrink-0 items-center text-[11px]">
          {menus.map((m) => (
            <button key={m} className="px-[7px]">{m}</button>
          ))}
        </nav>

        <div className="flex h-[39px] shrink-0 overflow-hidden border-b-2 border-[#a9a9a9]">
          {topGroups.map((g, i) => <ToolGroup key={i} {...g} />)}
        </div>

        <div className="flex min-h-0 flex-1">
          <div className="flex w-[73px] shrink-0 flex-col border-r-2 border-[#a9a9a9]">
            <div className="min-h-0 flex-1 overflow-hidden border-b border-[#a9a9a9]">
              <GripX />
              {leftSections.map((keys, i) => (
                <div key={i} className="ml-[2px] flex flex-wrap">
                  {i > 0 && <div className="mb-[5px] ml-[2px] mr-[3px] mt-[2px] h-px w-full bg-[#999]" />}
                  {keys.map((k) => <ToolButton key={k} name={k} />)}
                </div>
              ))}
            </div>
            <MiniBar label="Curviloft">
              <text x="1" y="20" fontSize="25" fontWeight="bold" fontStyle="italic" fontFamily="Liberation Serif" fill="#16229a">C</text>
              <text x="18" y="21" fontSize="24" fontWeight="bold" fontStyle="italic" fontFamily="Liberation Serif" fill="#16229a">z</text>
              <path d="M1 26h30" stroke="#e31fb4" strokeWidth="1.5" />
            </MiniBar>
            <MiniBar label="Fredo6">
              <text x="4" y="21" fontSize="20" fontWeight="bold" fontStyle="italic" fontFamily="Liberation Serif" fill="#16229a">F6</text>
              <path d="M4 24h23" stroke="#2aa336" strokeWidth="2.5" />
            </MiniBar>
          </div>

          <Viewport />
          <Tray />

          <div className="flex w-9 shrink-0 flex-col">
            {rightSections.map((keys, i) => (
              <div key={i} className="flex flex-col items-center border-b border-[#a9a9a9] pb-px">
                <div className="w-full"><GripX /></div>
                {keys.map((k, j) =>
                  k === "|" ? <div key={j} className="mb-[5px] mt-[2px] h-px w-[30px] bg-[#999]" /> : <ToolButton key={k} name={k} />
                )}
              </div>
            ))}
          </div>
        </div>

        <div className="flex h-[38px] shrink-0 overflow-hidden border-b border-[#a9a9a9]">
          {bottomGroups.map((g, i) => <ToolGroup key={i} {...g} />)}
        </div>

        <footer className="flex h-[27px] shrink-0 items-center pl-[6px] font-['Open_Sans',sans-serif] text-[13px]">
          <StatusIcon label="Geo-location"><path d="M7 3a2.500 2.500 0 012 4L7.500 11h-1L5 7a2.500 2.500 0 012-4z" fill="#8d8d86" /></StatusIcon>
          <StatusIcon label="Credits"><path d="M7 3.500v1.800M7 6v5" stroke="#8d8d86" strokeWidth="2.2" /></StatusIcon>
          <StatusIcon label="Sign in"><circle cx="7" cy="5" r="2.4" fill="#8d8d86" /><path d="M3 11c0-4 8-4 8 0-2 2-6 2-8 0z" fill="#8d8d86" /></StatusIcon>
          <div className="-ml-[4px] mr-[10px] h-[9px] w-px bg-[#888]" />
          <p className="flex-1">Select objects. Shift to extend select. Drag mouse to select multiple.</p>
          <div className="mr-[10px] h-[9px] w-px bg-[#888]" />
          <label htmlFor="measure">Measurements</label>
          <input id="measure" className="ml-[9px] h-6 w-[200px] border border-[#a9bbd6] bg-transparent px-1 outline-none" />
          <svg viewBox="0 0 10 10" className="ml-3 h-[10px] w-[10px] self-end" fill="#bbb">
            <path d="M7 0h2v2H7zM7 4h2v2H7zM7 8h2v2H7zM3.500 4h2v2h-2zM3.500 8h2v2h-2zM0 8h2v2H0z" />
          </svg>
        </footer>
      </div>
    </div>
  );
}
